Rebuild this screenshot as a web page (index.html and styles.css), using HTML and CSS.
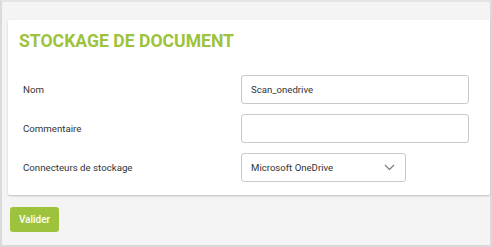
FILE: index.html
```html
<!DOCTYPE html>
<html lang="fr">
<head>
<meta charset="utf-8">
<link rel="stylesheet" href="styles.css">
</head>
<body>
<div class="frame">
  <section class="card">
    <h1 class="title">STOCKAGE DE DOCUMENT</h1>
    <div class="form">
      <label class="label">Nom</label>
      <div class="field"><div class="input">Scan_onedrive</div></div>
      <label class="label">Commentaire</label>
      <div class="field"><div class="input"></div></div>
      <label class="label">Connecteurs de stockage</label>
      <div class="field">
        <div class="input select">
          <span>Microsoft OneDrive</span>
          <svg class="chev" width="11" height="7" viewBox="0 0 11 7"><path d="M1 1l4.5 4.5L10 1" fill="none" stroke="#777" stroke-width="1.1"/></svg>
        </div>
      </div>
    </div>
  </section>
  <div class="actions"><button class="btn">Valider</button></div>
</div>
</body>
</html>
```
FILE: styles.css
```css
* { box-sizing: border-box; }
html, body { margin: 0; padding: 0; }
body { font-family: Roboto, "Liberation Sans", sans-serif; }
.frame {
  width: 492px;
  height: 247px;
  background: #f4f4f4;
  border: 2px solid #dadada;
  border-top-color: #e4e4e4;
  padding: 18px 0 0 6px;
}
.card {
  background: #fff;
  height: 175px;
  box-shadow: 0 1px 2px rgba(0,0,0,0.22);
  border-radius: 2px;
  padding: 11px 0 0 11px;
}
.title {
  margin: 0;
  font-size: 17.6px;
  line-height: 20px;
  font-weight: 700;
  color: #9cc33b;
}
.form {
  margin-top: 24px;
  padding-left: 4px;
  display: grid;
  grid-template-columns: 218px 228px;
  row-gap: 10px;
  align-items: center;
}
.label {
  font-size: 9.7px;
  color: #333;
}
.input {
  height: 29px;
  border: 1px solid #c9c9c9;
  border-radius: 3px;
  padding-left: 9px;
  font-size: 9.6px;
  color: #333;
  display: flex;
  align-items: center;
}
.select {
  width: 165px;
  justify-content: space-between;
  padding-right: 10px;
}
.chev { display: block; }
.actions { padding-top: 12px; padding-left: 2px; }
.btn {
  width: 49px;
  height: 25px;
  background: #9cc33b;
  border: none;
  border-radius: 3px;
  color: #fff;
  font-family: Roboto, "Liberation Sans", sans-serif;
  font-size: 10px;
  font-weight: 500;
  padding: 0;
}
```
